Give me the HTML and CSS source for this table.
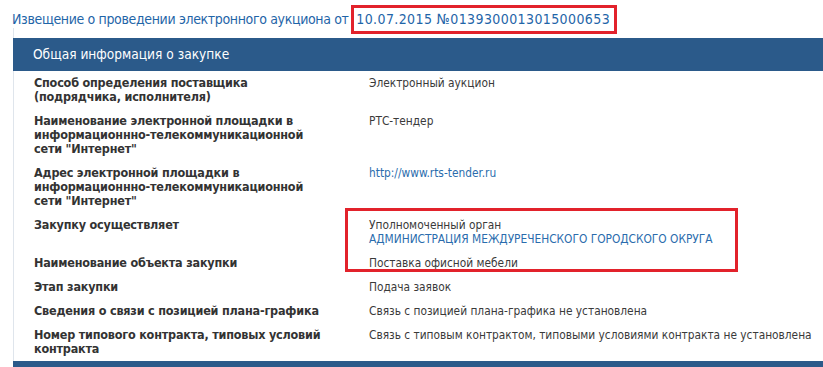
FILE: index.html
```html
<!DOCTYPE html>
<html lang="ru">
<head>
    <meta charset="UTF-8">
    <title>Извещение о проведении электронного аукциона</title>
    <link rel="stylesheet" href="styles.css">
</head>
<body>
    <div class="page">
        <h1 class="notice-title">Извещение о проведении электронного аукциона от <span class="notice-number">10.07.2015 №0139300013015000653</span></h1>

        <div class="section">
            <h2 class="section-head">Общая информация о закупке</h2>
            <table class="info-table">
                <tr>
                    <td class="label">Способ определения поставщика (подрядчика, исполнителя)</td>
                    <td class="value">Электронный аукцион</td>
                </tr>
                <tr>
                    <td class="label">Наименование электронной площадки в информационнно-телекоммуникационной сети "Интернет"</td>
                    <td class="value">РТС-тендер</td>
                </tr>
                <tr>
                    <td class="label">Адрес электронной площадки в информационнно-телекоммуникационной сети "Интернет"</td>
                    <td class="value"><a href="#">http://www.rts-tender.ru</a></td>
                </tr>
                <tr>
                    <td class="label">Закупку осуществляет</td>
                    <td class="value">Уполномоченный орган<br><a href="#">АДМИНИСТРАЦИЯ МЕЖДУРЕЧЕНСКОГО ГОРОДСКОГО ОКРУГА</a></td>
                </tr>
                <tr>
                    <td class="label">Наименование объекта закупки</td>
                    <td class="value">Поставка офисной мебели</td>
                </tr>
                <tr>
                    <td class="label">Этап закупки</td>
                    <td class="value">Подача заявок</td>
                </tr>
                <tr>
                    <td class="label">Сведения о связи с позицией плана-графика</td>
                    <td class="value">Связь с позицией плана-графика не установлена</td>
                </tr>
                <tr>
                    <td class="label">Номер типового контракта, типовых условий контракта</td>
                    <td class="value">Связь с типовым контрактом, типовыми условиями контракта не установлена</td>
                </tr>
            </table>
            <div class="section-head next"></div>
        </div>
    </div>

    <!-- highlight frames -->
    <div class="mark mark-number"></div>
    <div class="mark mark-customer"></div>
</body>
</html>
```

FILE: styles.css
```css
body {
    margin: 0;
    background-color: #fff;
    font-family: "DejaVu Sans Condensed", "DejaVu Sans", sans-serif;
    overflow: hidden;
}

.page {
    padding: 10px 0 0 12px;
}

.notice-title {
    margin: 0;
    font-size: 14px;
    font-weight: normal;
    letter-spacing: -0.35px;
    line-height: 18px;
    color: #1f65a8;
    white-space: nowrap;
}

.notice-number {
    margin-left: 4px;
    letter-spacing: 0.4px;
}

.section {
    margin-top: 0;
    padding-top: 10px;
    border-left: 1px solid #dfe5ec;
    margin-left: 1px;
}

.section-head {
    margin: 0 0 0 -1px;
    height: 33px;
    padding-left: 20px;
    background-color: #2b5a8a;
    color: #fff;
    font-size: 13.6px;
    font-weight: normal;
    line-height: 33px;
}

.section-head.next {
    height: 10px;
}

.info-table {
    width: 100%;
    border-collapse: collapse;
}

.info-table td {
    vertical-align: top;
    padding: 5px 0;
    line-height: 14px;
}

.label {
    width: 295px;
    padding-left: 20px !important;
    padding-right: 40px !important;
    font-size: 12.5px;
    letter-spacing: -0.2px;
    font-weight: bold;
    color: #333;
}

.value {
    font-size: 11.8px;
    color: #3a3a3a;
}

.value a {
    color: #2a6cad;
    text-decoration: none;
}

.mark {
    position: absolute;
    border: 3px solid #e2222b;
}

.mark-number {
    left: 351px;
    top: 5px;
    width: 260px;
    height: 23px;
}

.mark-customer {
    left: 345px;
    top: 208px;
    width: 387px;
    height: 58px;
}
```
